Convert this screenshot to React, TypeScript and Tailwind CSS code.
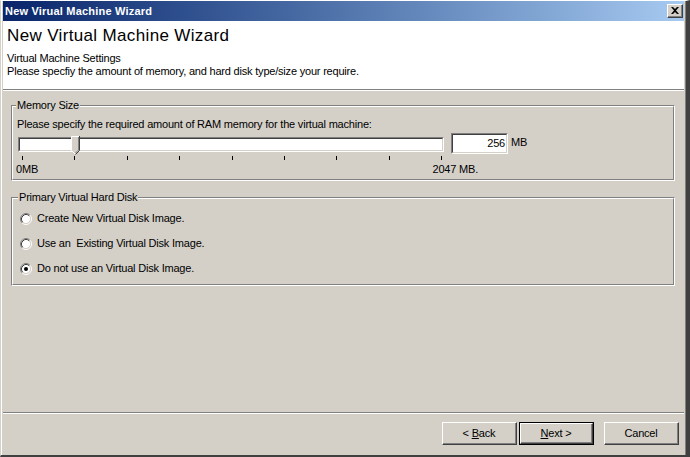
import React from "react";

const ticks = [0, 1, 2, 3, 4, 5, 6, 7, 8];

const Radio = ({ checked }: { checked?: boolean }) => (
  <svg width="12" height="12" viewBox="0 0 12 12" className="shrink-0">
    <circle cx="6" cy="6" r="4.5" fill="#ffffff" />
    <path d="M2.11 9.89 A5.5 5.5 0 0 1 9.89 2.11" fill="none" stroke="#808080" strokeWidth="1" />
    <path d="M9.89 2.11 A5.5 5.5 0 0 1 2.11 9.89" fill="none" stroke="#ffffff" strokeWidth="1" />
    <path d="M2.82 9.18 A4.5 4.5 0 0 1 9.18 2.82" fill="none" stroke="#404040" strokeWidth="1" />
    <path d="M9.18 2.82 A4.5 4.5 0 0 1 2.82 9.18" fill="none" stroke="#d4d0c8" strokeWidth="1" />
    {checked && <circle cx="6" cy="6" r="2" fill="#000000" />}
  </svg>
);

const Thumb = () => (
  <svg width="9" height="19" viewBox="0 0 9 19">
    <polygon points="0,0 8,0 8,14 4,18 0,14" fill="#d4d0c8" />
    <path d="M0.5 14.5 V0.5 H8" fill="none" stroke="#ffffff" />
    <path d="M0.5 14.5 L4 18" fill="none" stroke="#ffffff" />
    <path d="M8.5 0 V14.5 L4.5 18.5" fill="none" stroke="#404040" />
    <path d="M7.5 1 V14 L4.5 17" fill="none" stroke="#808080" />
  </svg>
);

const GroupBox = ({
  title,
  className,
  legendClass,
  children,
}: {
  title: string;
  className: string;
  legendClass: string;
  children: React.ReactNode;
}) => (
  <div className={`ml-[8px] mr-[9px] border border-t-[#808080] border-l-[#808080] border-r-white border-b-white ${className}`}>
    <div className="h-full border border-t-white border-l-white border-r-[#808080] border-b-[#808080]">
      <div className={`-mt-[8px] w-fit bg-[#d4d0c8] px-px leading-[13px] ${legendClass}`}>{title}</div>
      {children}
    </div>
  </div>
);

const Button = ({ children, isDefault }: { children: React.ReactNode; isDefault?: boolean }) => (
  <div className={`w-[75px] h-[23px] ${isDefault ? "border border-black" : ""}`}>
    <div className="h-full border border-t-white border-l-white border-r-[#404040] border-b-[#404040]">
      <div className="h-full flex items-center justify-center border-r border-b border-r-[#808080] border-b-[#808080]">
        {children}
      </div>
    </div>
  </div>
);

export default function App() {
  return (
    <div className="w-[690px] h-[457px] overflow-hidden bg-[#d4d0c8] border-t border-t-white border-l border-l-[#d4d0c8] border-r-4 border-r-[#404040] border-b-2 border-b-[#404040] font-['Liberation_Sans',Arial,sans-serif] text-[11px] tracking-[-0.2px] text-black">
      <div className="h-full flex flex-col border-l border-l-white border-r border-r-[#808080] px-px">
        {/** Title bar */}
        <div className="h-[20px] shrink-0 flex items-center justify-between pl-[2px] pr-px bg-linear-to-r from-[#0a246a] to-[#a6caf0]">
          <span className="font-bold text-white leading-[13px] tracking-[0.2px]">New Virual Machine Wizard</span>
          <div className="w-[16px] h-[14px] bg-[#d4d0c8] border border-t-white border-l-white border-r-[#404040] border-b-[#404040]">
            <div className="h-full flex items-center justify-center border-r border-b border-r-[#808080] border-b-[#808080]">
              <svg width="8" height="7" viewBox="0 0 8 7">
                <path d="M0 0 H2 L4 2 L6 0 H8 L5 3.5 L8 7 H6 L4 5 L2 7 H0 L3 3.5 Z" fill="#000000" />
              </svg>
            </div>
          </div>
        </div>

        {/** Header */}
        <div className="h-[69px] shrink-0 bg-white border-b border-b-[#808080] px-[4px] pt-[5px]">
          <div className="text-[17px] leading-[20px] tracking-[0.35px]">New Virtual Machine Wizard</div>
          <div className="mt-[6px] leading-[13px]">Virtual Machine Settings</div>
          <div className="leading-[13px]">Please specfiy the amount of memory, and hard disk type/size your require.</div>
        </div>

        {/** Body */}
        <div className="flex-1 border-t border-t-white">
          <GroupBox title="Memory Size" className="mt-[14px] h-[76px]" legendClass="ml-[3px]">
            <div className="mt-[6px] pl-[4px] leading-[13px]">
              Please specify the required amount of RAM memory for the virtual machine:
            </div>
            <div className="mt-[2px] flex items-start h-[21px]">
              <div className="relative ml-[5px] mt-[4px] w-[426px] h-[15px] border border-t-[#808080] border-l-[#808080] border-r-white border-b-white">
                <div className="h-full bg-white border border-t-[#404040] border-l-[#404040] border-r-[#d4d0c8] border-b-[#d4d0c8]" />
                <div className="absolute left-[52px] -top-[2px]">
                  <Thumb />
                </div>
              </div>
              <div className="ml-[7px] w-[57px] h-[21px] border border-t-[#808080] border-l-[#808080] border-r-white border-b-white">
                <div className="h-full bg-white border border-t-[#404040] border-l-[#404040] border-r-[#d4d0c8] border-b-[#d4d0c8] flex items-center justify-end pr-[1px] leading-[13px]">
                  256
                </div>
              </div>
              <span className="ml-[3px] mt-[3px] leading-[13px]">MB</span>
            </div>
            <svg width="430" height="5" viewBox="0 0 430 5" className="block ml-[5px] mt-[2px]">
              {ticks.map((i) => (
                <rect key={i} x={Math.round(4 + i * 52.4)} y="0" width="1" height="4" fill="#000000" />
              ))}
            </svg>
            <div className="ml-[3px] mt-[2px] w-[462px] flex justify-between leading-[13px]">
              <span>0MB</span>
              <span>2047 MB.</span>
            </div>
          </GroupBox>

          <GroupBox title="Primary Virtual Hard Disk" className="mt-[16px] h-[89px]" legendClass="ml-[5px]">
            <div className="mt-[8px] pl-[7px] flex flex-col gap-[12px]">
              <div className="flex items-center gap-[5px] leading-[13px]">
                <Radio />
                <span>Create New Virtual Disk Image.</span>
              </div>
              <div className="flex items-center gap-[5px] leading-[13px]">
                <Radio />
                <span className="whitespace-pre">Use an  Existing Virtual Disk Image.</span>
              </div>
              <div className="flex items-center gap-[5px] leading-[13px]">
                <Radio checked />
                <span>Do not use an Virtual Disk Image.</span>
              </div>
            </div>
          </GroupBox>
        </div>

        {/** Footer */}
        <div className="h-[43px] shrink-0 border-t border-t-[#808080]">
          <div className="h-full border-t border-t-white flex justify-end items-start pt-[8px] pr-[5px]">
            <Button>
              <span>
                &lt; <u>B</u>ack
              </span>
            </Button>
            <div className="ml-[2px]">
              <Button isDefault>
                <span>
                  <u>N</u>ext &gt;
                </span>
              </Button>
            </div>
            <div className="ml-[10px]">
              <Button>Cancel</Button>
            </div>
          </div>
        </div>
      </div>
    </div>
  );
}
